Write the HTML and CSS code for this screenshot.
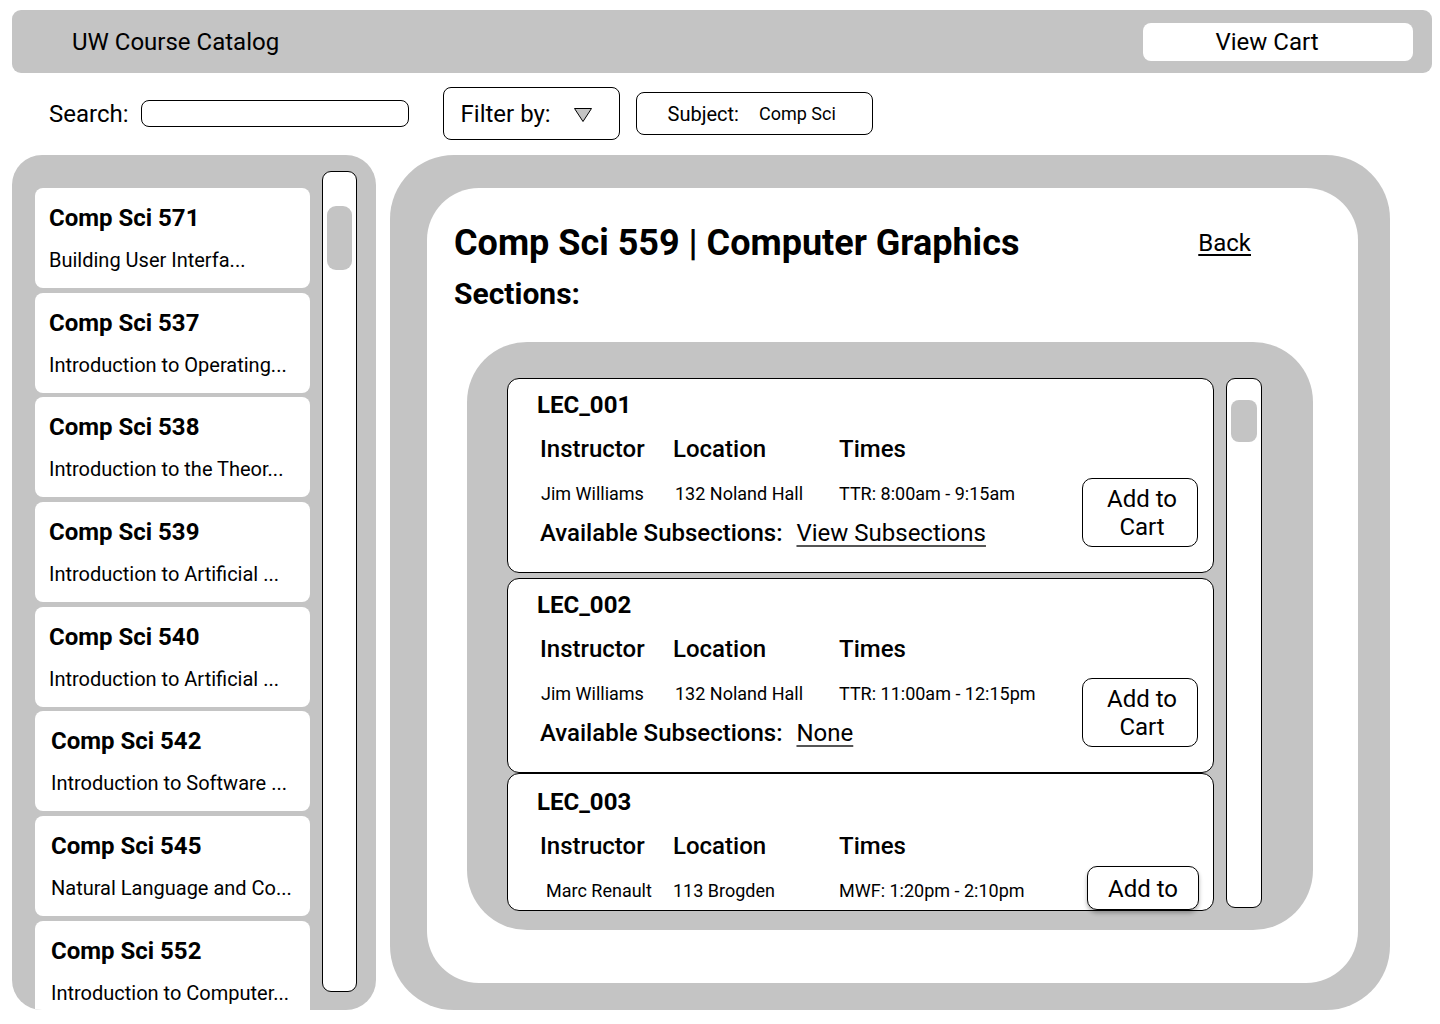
FILE: index.html
```html
<!DOCTYPE html>
<html>
<head>
<meta charset="utf-8">
<title>UW Course Catalog</title>
<link rel="stylesheet" href="styles.css">
</head>
<body>
<div class="page">
  <header class="topbar">
    <div class="brand">UW Course Catalog</div>
    <button class="cart-btn">View Cart</button>
  </header>

  <div class="toolbar">
    <label class="search-label">Search:</label>
    <div class="search-input"></div>
    <div class="filter-box">
      <span>Filter by:</span>
      <svg class="tri" width="20" height="16" viewBox="0 0 20 16"><polygon points="1.5,1.5 18.5,1.5 10,14.5" fill="#c4c4c4" stroke="#000" stroke-width="1" stroke-linejoin="round"/></svg>
    </div>
    <div class="subject-box">
      <span class="subj-label">Subject:</span>
      <span class="subj-value">Comp Sci</span>
    </div>
  </div>

  <div class="content">
    <aside class="course-panel">
      <div class="course-list">
        <div class="course-card"><div class="c-title">Comp Sci 571</div><div class="c-sub">Building User Interfa...</div></div>
        <div class="course-card"><div class="c-title">Comp Sci 537</div><div class="c-sub">Introduction to Operating...</div></div>
        <div class="course-card"><div class="c-title">Comp Sci 538</div><div class="c-sub">Introduction to the Theor...</div></div>
        <div class="course-card"><div class="c-title">Comp Sci 539</div><div class="c-sub">Introduction to Artificial ...</div></div>
        <div class="course-card"><div class="c-title">Comp Sci 540</div><div class="c-sub">Introduction to Artificial ...</div></div>
        <div class="course-card shift"><div class="c-title">Comp Sci 542</div><div class="c-sub">Introduction to Software ...</div></div>
        <div class="course-card shift"><div class="c-title">Comp Sci 545</div><div class="c-sub">Natural Language and Co...</div></div>
        <div class="course-card shift"><div class="c-title">Comp Sci 552</div><div class="c-sub">Introduction to Computer...</div></div>
      </div>
      <div class="scroll-track left-track"><div class="scroll-thumb"></div></div>
    </aside>

    <main class="detail-panel">
      <div class="detail-inner">
        <div class="detail-head">
          <h1 class="detail-title">Comp Sci 559 | Computer Graphics</h1>
          <a class="back-link">Back</a>
        </div>
        <h2 class="sections-title">Sections:</h2>

        <div class="sections-panel">
          <div class="section-list">
            <div class="section-card">
              <div class="sec-main">
                <div class="sec-name">LEC_001</div>
                <div class="sec-grid">
                  <div class="sec-h">Instructor</div><div class="sec-h">Location</div><div class="sec-h">Times</div>
                </div>
                <div class="sec-grid sec-data">
                  <div class="d-inst">Jim Williams</div><div class="d-loc">132 Noland Hall</div><div>TTR: 8:00am - 9:15am</div>
                </div>
                <div class="sec-sub"><span class="sub-label">Available Subsections:</span><a class="sub-link">View Subsections</a></div>
              </div>
              <button class="add-btn">Add to<br>Cart</button>
            </div>

            <div class="section-card">
              <div class="sec-main">
                <div class="sec-name">LEC_002</div>
                <div class="sec-grid">
                  <div class="sec-h">Instructor</div><div class="sec-h">Location</div><div class="sec-h">Times</div>
                </div>
                <div class="sec-grid sec-data">
                  <div class="d-inst">Jim Williams</div><div class="d-loc">132 Noland Hall</div><div>TTR: 11:00am - 12:15pm</div>
                </div>
                <div class="sec-sub"><span class="sub-label">Available Subsections:</span><a class="sub-link">None</a></div>
              </div>
              <button class="add-btn">Add to<br>Cart</button>
            </div>

            <div class="section-card partial">
              <div class="sec-main">
                <div class="sec-name">LEC_003</div>
                <div class="sec-grid">
                  <div class="sec-h">Instructor</div><div class="sec-h">Location</div><div class="sec-h">Times</div>
                </div>
                <div class="sec-grid sec-data">
                  <div class="d-inst alt">Marc Renault</div><div class="d-loc alt">113 Brogden</div><div>MWF: 1:20pm - 2:10pm</div>
                </div>
              </div>
              <button class="add-btn cut">Add to</button>
            </div>
          </div>
          <div class="scroll-track sec-track"><div class="scroll-thumb sec-thumb"></div></div>
        </div>
      </div>
    </main>
  </div>
</div>
</body>
</html>
```

FILE: styles.css
```css
* { box-sizing: border-box; }

html, body {
  margin: 0;
  padding: 0;
  background: #fff;
  font-family: Roboto, "Liberation Sans", sans-serif;
  color: #000;
}

.page {
  width: 1440px;
  height: 1024px;
  padding: 10px 8px 0 12px;
  overflow: hidden;
}

/* top bar */
.topbar {
  height: 63px;
  background: #c4c4c4;
  border-radius: 9px;
  display: flex;
  align-items: center;
  padding: 0 19px 0 60px;
}
.brand {
  font-size: 24px;
  flex: 1;
  padding-top: 1px;
}
.cart-btn {
  width: 270px;
  height: 38px;
  background: #fff;
  border: none;
  border-radius: 8px;
  font-family: inherit;
  font-size: 24px;
  color: #000;
  padding: 0 22px 0 0;
}

/* toolbar */
.toolbar {
  height: 53px;
  margin-top: 14px;
  display: flex;
  align-items: center;
  padding-left: 37px;
}
.search-label {
  font-size: 24px;
  margin-right: 12px;
}
.search-input {
  width: 268px;
  height: 27px;
  border: 1px solid #000;
  border-radius: 8px;
  margin-right: 34px;
}
.filter-box {
  width: 177px;
  height: 53px;
  border: 1px solid #000;
  border-radius: 8px;
  display: flex;
  align-items: center;
  padding-left: 17px;
  font-size: 24px;
  margin-right: 16px;
}
.filter-box .tri {
  margin-left: 22px;
  margin-top: 2px;
}
.subject-box {
  width: 237px;
  height: 43px;
  border: 1px solid #000;
  border-radius: 8px;
  display: flex;
  align-items: center;
  padding-left: 31px;
}
.subj-label { font-size: 20px; margin-right: 20px; }
.subj-value { font-size: 18px; }

/* content */
.content {
  display: flex;
  gap: 14px;
  margin-top: 15px;
  height: 855px;
}

.course-panel {
  width: 364px;
  height: 855px;
  background: #c4c4c4;
  border-radius: 30px;
  display: flex;
  padding: 0 19px 0 23px;
  overflow: hidden;
}
.course-list {
  width: 275px;
  padding-top: 33px;
  display: flex;
  flex-direction: column;
  gap: 4.7px;
}
.course-card {
  flex: 0 0 100px;
  background: #fff;
  border-radius: 8px;
  padding-left: 14px;
}
.course-card.shift { padding-left: 16px; }
.c-title {
  font-size: 24px;
  font-weight: 700;
  line-height: 30px;
  margin-top: 15px;
}
.c-sub {
  font-size: 20px;
  line-height: 26px;
  margin-top: 14px;
}

.scroll-track {
  background: #fff;
  border: 1px solid #000;
  border-radius: 9px;
  position: relative;
}
.left-track {
  width: 35px;
  height: 821px;
  margin: 16px 0 0 12px;
  padding: 34px 4px 0 4px;
}
.scroll-thumb {
  height: 64px;
  background: #c4c4c4;
  border-radius: 9px;
}

/* detail */
.detail-panel {
  width: 1000px;
  height: 855px;
  background: #c4c4c4;
  border-radius: 64px;
  padding: 33px 32px 27px 37px;
}
.detail-inner {
  height: 100%;
  background: #fff;
  border-radius: 52px;
  padding: 34px 0 0 27px;
}
.detail-head {
  display: flex;
  align-items: center;
  padding-right: 107px;
}
.detail-title {
  margin: 0;
  flex: 1;
  font-size: 36px;
  font-weight: 700;
  line-height: 42px;
}
.back-link {
  font-size: 24px;
  text-decoration: underline;
  text-underline-offset: 3px;
}
.sections-title {
  margin: 12px 0 0 0;
  font-size: 30px;
  font-weight: 700;
  line-height: 36px;
}

.sections-panel {
  width: 846px;
  height: 588px;
  margin: 30px 0 0 13px;
  background: #c4c4c4;
  border-radius: 60px;
  padding: 36px 51px 0 40px;
  display: flex;
  gap: 12px;
}
.section-list {
  width: 707px;
  display: flex;
  flex-direction: column;
  gap: 5px;
}
.section-card {
  flex: 0 0 195px;
  background: #fff;
  border: 1px solid #000;
  border-radius: 12px;
  display: flex;
  padding: 0 15px 0 29px;
}
.section-card.partial {
  flex: 0 0 135px;
  margin-top: -5px;
}
.sec-main { flex: 1; }
.sec-name {
  font-size: 24px;
  font-weight: 700;
  line-height: 30px;
  margin-top: 11px;
}
.partial .sec-name { margin-top: 13px; }
.sec-grid {
  display: grid;
  grid-template-columns: 133px 166px auto;
  margin-left: 3px;
}
.sec-h {
  font-size: 24px;
  font-weight: 500;
  line-height: 30px;
  margin-top: 14px;
}
.sec-data {
  font-size: 18px;
  line-height: 24px;
  margin-top: 18px;
}
.d-inst { padding-left: 1px; }
.d-inst.alt { padding-left: 6px; }
.d-loc { padding-left: 2px; }
.d-loc.alt { padding-left: 0; }
.sec-sub {
  margin: 12px 0 0 3px;
  font-size: 24px;
  line-height: 30px;
}
.sub-label { font-weight: 500; margin-right: 14px; }
.sub-link {
  text-decoration: underline;
  text-decoration-color: #555;
  text-underline-offset: 4px;
}
.add-btn {
  align-self: flex-start;
  margin-top: 99px;
  width: 116px;
  height: 69px;
  background: #fff;
  border: 1px solid #000;
  border-radius: 10px;
  font-family: inherit;
  font-size: 24px;
  line-height: 28px;
  color: #000;
  padding: 0 0 0 4px;
}
.add-btn.cut {
  margin-top: 92px;
  width: 112px;
  height: 44px;
  margin-right: -1px;
  font-size: 24px;
  line-height: 44px;
  padding: 0;
  box-shadow: 0 3px 4px rgba(0,0,0,0.3);
  position: relative;
}

.sec-track {
  width: 36px;
  height: 530px;
  padding: 21px 4px 0 4px;
}
.sec-thumb {
  height: 42px;
  border-radius: 8px;
}
```
